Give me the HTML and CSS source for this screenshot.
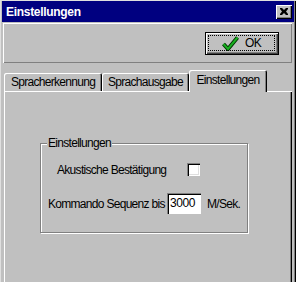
FILE: index.html
```html
<!DOCTYPE html>
<html lang="de">

<head>
  <meta charset="utf-8">
  <title>Einstellungen</title>
  <link rel="stylesheet" href="styles.css">
</head>

<body>
  <div class="window">
    <div class="titlebar">
      <span class="titlebar-text">Einstellungen</span>
      <button class="close-btn" type="button" aria-label="Schließen">
        <svg width="8" height="7" viewBox="0 0 8 7">
          <path d="M0 0h2l2 2 2-2h2v1L6 3.5 8 6v1H6L4 5 2 7H0V6l2-2.5L0 1z" fill="#000" />
        </svg>
      </button>
    </div>

    <div class="toolbar">
      <button class="ok-btn" type="button">
        <span class="ok-focus">
          <svg class="ok-check" width="17" height="15" viewBox="0 0 17 15">
            <polyline points="1.5,8 6,13 15.5,1.5" fill="none" stroke="#003300" stroke-width="4" />
            <polyline points="1.5,8 6,13 15.5,1.5" fill="none" stroke="#18b020" stroke-width="2" />
          </svg>
          <span>OK</span>
        </span>
      </button>
    </div>

    <div class="tabs">
      <div class="tab-strip">
        <div class="tab tab-1">Spracherkennung</div>
        <div class="tab tab-2">Sprachausgabe</div>
        <div class="tab tab-active">Einstellungen</div>
      </div>
      <div class="tab-panel">
        <div class="group">
          <span class="group-title">Einstellungen</span>
          <div class="row row-check">
            <span class="row-label">Akustische Bestätigung</span>
            <span class="checkbox"></span>
          </div>
          <div class="row row-seq">
            <span class="row-label">Kommando Sequenz bis</span>
            <input class="field" type="text" value="3000" readonly>
            <span class="unit">M/Sek.</span>
          </div>
        </div>
      </div>
    </div>
  </div>
</body>

</html>
```

FILE: styles.css
```css
:root {
  --w95-face: #c0c0c0;
  --w95-light: #dfdfdf;
  --w95-shadow: #808080;
  --w95-dark: #000;
  --w95-title: #000080;
  --w95-font: "Liberation Sans", Arial, sans-serif;
}

html,
body {
  margin: 0;
  height: 100%;
  overflow: hidden;
}

body {
  font-family: var(--w95-font);
  font-size: 12px;
  letter-spacing: -0.7px;
  color: #000;
  background: #fff;
}

.window {
  box-sizing: border-box;
  width: 296px;
  height: 282px;
  padding: 1px 2px 0 2px;
  background: var(--w95-face);
  box-shadow:
    inset 1px 1px var(--w95-light),
    inset -1px 0 var(--w95-dark),
    inset -2px 0 var(--w95-shadow);
  display: flex;
  flex-direction: column;
}

/* title bar */
.titlebar {
  height: 21px;
  background: var(--w95-title);
  display: flex;
  align-items: center;
  justify-content: space-between;
  padding: 0 2px 0 4px;
}

.titlebar-text {
  color: #fff;
  font-weight: bold;
  letter-spacing: -0.3px;
}

.close-btn {
  width: 16px;
  height: 14px;
  padding: 0;
  border: 0;
  background: var(--w95-face);
  box-shadow:
    inset 1px 1px #fff,
    inset -1px -1px var(--w95-dark),
    inset -2px -2px var(--w95-shadow);
  display: flex;
  align-items: center;
  justify-content: center;
}

/* button row */
.toolbar {
  height: 40px;
  margin: 1px 2px 0 1px;
  box-sizing: border-box;
  padding: 9px 13px 0 0;
  display: flex;
  justify-content: flex-end;
  align-items: flex-start;
  box-shadow:
    inset 1px 1px #fff,
    inset -1px -1px var(--w95-shadow);
}

.ok-btn {
  width: 74px;
  height: 23px;
  border: 1px solid var(--w95-dark);
  background: var(--w95-face);
  font: inherit;
  letter-spacing: inherit;
  box-shadow:
    inset 1px 1px #fff,
    inset -1px -1px #404040,
    inset -2px -2px var(--w95-shadow);
  display: flex;
  padding: 3px 4px 4px 3px;
  box-sizing: border-box;
}

.ok-focus {
  flex: 1;
  outline: 1px dotted #000;
  display: flex;
  align-items: center;
  justify-content: center;
  gap: 6px;
}

.ok-check {
  display: block;
}

/* tabs */
.tabs {
  flex: 1;
  margin: 7px 2px 0 2px;
  display: flex;
  flex-direction: column;
}

.tab-strip {
  height: 21px;
  display: flex;
  align-items: flex-end;
}

.tab {
  box-sizing: border-box;
  height: 18px;
  text-align: center;
  line-height: 17px;
  padding-top: 1px;
  border-top-left-radius: 2px;
  border-top-right-radius: 2px;
  box-shadow:
    inset 1px 1px #fff,
    inset -1px 0 var(--w95-dark),
    inset -2px 0 var(--w95-shadow);
}

.tab-1 {
  width: 98px;
}

.tab-2 {
  width: 87px;
}

.tab-active {
  width: 78px;
  height: 22px;
  margin-bottom: -1px;
  line-height: 19px;
  position: relative;
  z-index: 1;
  background: var(--w95-face);
}

.tab-panel {
  flex: 1;
  box-shadow:
    inset 1px 1px #fff,
    inset -1px 0 var(--w95-dark),
    inset -2px 0 var(--w95-shadow);
  padding: 52px 0 0 36px;
}

/* group box */
.group {
  position: relative;
  box-sizing: border-box;
  width: 208px;
  height: 90px;
  border: 1px solid var(--w95-shadow);
  box-shadow:
    inset 1px 1px #fff,
    1px 1px #fff;
  padding-top: 19px;
}

.group-title {
  position: absolute;
  top: -8px;
  left: 6px;
  padding: 0 1px;
  line-height: 14px;
  background: var(--w95-face);
}

.row {
  display: flex;
  align-items: center;
}

.row-check {
  height: 13px;
}

.row-check .row-label {
  margin-left: 16px;
  width: 130px;
}

.checkbox {
  width: 13px;
  height: 13px;
  background: #fff;
  box-shadow:
    inset 1px 1px var(--w95-shadow),
    inset 2px 2px var(--w95-dark),
    inset -1px -1px #fff,
    inset -2px -2px var(--w95-light);
}

.row-seq {
  height: 21px;
  margin-top: 17px;
}

.row-seq .row-label {
  margin-left: 7px;
  width: 119px;
}

.field {
  box-sizing: border-box;
  width: 34px;
  height: 21px;
  padding: 0 0 1px 3px;
  border: 0;
  outline: none;
  font: inherit;
  letter-spacing: -0.4px;
  background: #fff;
  box-shadow:
    inset 1px 1px var(--w95-shadow),
    inset 2px 2px var(--w95-dark);
}

.unit {
  margin-left: 6px;
}
```
